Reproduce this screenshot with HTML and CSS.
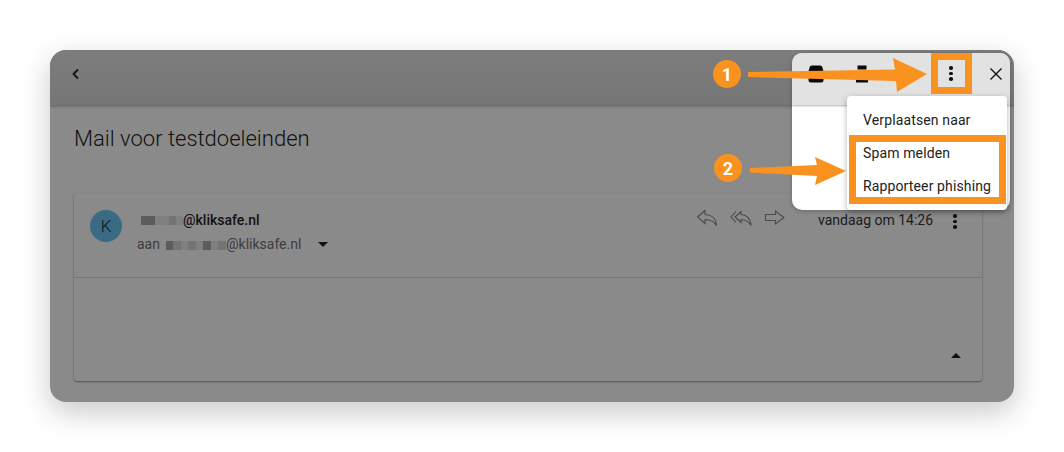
FILE: index.html
```html
<!DOCTYPE html>
<html lang="en">
<head>
  <meta charset="UTF-8">
  <title>Mail voor testdoeleinden</title>
  <link rel="stylesheet" href="styles.css">
</head>
<body>

<div class="window">
  <!-- Dimmed mail view -->
  <header class="topbar">
    <svg class="back" width="12" height="12" viewBox="0 0 12 12"><path d="M8 1.500 3.500 6 8 10.500" fill="none" stroke="#111" stroke-width="1.800"/></svg>
  </header>

  <main class="content">
    <h1 class="subject">Mail voor testdoeleinden</h1>

    <div class="card">
      <div class="card-head">
        <div class="avatar">K</div>
        <div class="people">
          <div class="from">
            <span class="blur">
              <i class="px dark"></i><i class="px dark"></i><i class="px soft"></i><i class="px soft"></i><i class="px mid"></i><i class="px soft"></i>
            </span>@kliksafe.nl
          </div>
          <div class="to">
            aan <span class="blur wide">
              <i class="px dark"></i><i class="px mid"></i><i class="px soft"></i><i class="px mid"></i><i class="px soft"></i><i class="px dark"></i><i class="px soft"></i><i class="px mid"></i>
            </span>@kliksafe.nl
            <span class="caret"></span>
          </div>
        </div>
        <div class="actions">
          <svg width="22" height="18" viewBox="0 0 22 18"><path d="M1.500 8 9 1.500V5.500C15 5.500 20 9 20.500 16.500 18 12.500 14.500 10.800 9 10.800V14.500Z" fill="none" stroke="#4a4a4a" stroke-width="1.100"/></svg>
          <svg width="22" height="18" viewBox="0 0 22 18"><path d="M5 8 11 2.500V5.500C16 5.500 20.500 9 21 16.500 18.500 12.500 15.500 10.800 11 10.800V13.500ZM6 2.500 1 8 6 13.500" fill="none" stroke="#4a4a4a" stroke-width="1.100"/></svg>
          <svg width="22" height="18" viewBox="0 0 22 18"><path d="M1.500 5.500H11.500V2L20 8.500 11.500 15V11.500H1.500Z" fill="none" stroke="#4a4a4a" stroke-width="1.100"/></svg>
        </div>
        <div class="date">vandaag om 14:26</div>
        <div class="dots"><i></i><i></i><i></i></div>
      </div>
      <div class="card-body">
        <span class="caret up"></span>
      </div>
    </div>
  </main>

  <!-- Undimmed toolbar part -->
  <div class="spotlight">
    <div class="spot-bar">
      <svg class="tool-a" width="16" height="18" viewBox="0 0 16 18"><path d="M1.500 3Q1.500 .5 4 .5H12Q14.500 .5 14.500 3L15.500 6H.5ZM.5 6.500H15.500V15Q15.500 17.500 13 17.500H3Q.5 17.500 .5 15Z" fill="#0a0a0a"/></svg>
      <svg class="tool-b" width="12" height="18" viewBox="0 0 12 18"><path d="M1.500 .5H10.500V4.500H1.500ZM0 7H12V8.500H0ZM0 14H12V17.500H0Z" fill="#0a0a0a"/></svg>
      <div class="more"><div class="dots"><i></i><i></i><i></i></div></div>
      <svg class="close" width="14" height="14" viewBox="0 0 14 14"><path d="M1.500 1.500 12.500 12.500M12.500 1.500 1.500 12.500" stroke="#111" stroke-width="1.400"/></svg>
    </div>
  </div>

  <ul class="menu">
    <li>Verplaatsen naar</li>
    <li>Spam melden</li>
    <li>Rapporteer phishing</li>
  </ul>
</div>

<!-- Annotations -->
<div class="mark mark-more"></div>
<div class="mark mark-items"></div>
<svg class="arrows" width="1064" height="452" viewBox="0 0 1064 452">
  <path d="M748 72 895 69.500 893 58 927 74 897 92 896 81 748 77Z" fill="#f9921f"/>
  <path d="M750 168 817 165 815 157 846 171 815 185 817 176 750 172.500Z" fill="#f9921f"/>
  <circle cx="727" cy="74" r="14" fill="#f9921f"/>
  <circle cx="728" cy="168" r="14" fill="#f9921f"/>
  <text x="727" y="80.500" class="num">1</text>
  <text x="728" y="174.500" class="num">2</text>
</svg>

</body>
</html>
```

FILE: styles.css
```css
body {
  margin: 0;
  padding: 50px;
  width: 964px;
  height: 352px;
  background-color: #fff;
  font-family: Roboto, sans-serif;
  overflow: hidden;
  position: relative;
}

.window {
  position: relative;
  height: 352px;
  border-radius: 16px;
  background-color: #8a8a8a;
  box-shadow: 0 10px 30px rgba(0, 0, 0, 0.22);
  overflow: hidden;
}

.topbar {
  display: flex;
  align-items: center;
  height: 55px;
  padding-left: 20px;
  padding-bottom: 8px;
  box-sizing: border-box;
  background: linear-gradient(#7d7d7d, #767676);
  box-shadow: 0 1px 3px rgba(0, 0, 0, 0.35);
}

.content {
  padding: 0 32px 0 24px;
}

.subject {
  margin: 21px 0 41px;
  font-size: 22px;
  line-height: 26px;
  font-weight: 300;
  color: #111;
}

.card {
  height: 188px;
  border-radius: 3px;
  background-color: #8a8a8a;
  box-shadow: 0 1px 2px rgba(0, 0, 0, 0.4);
  border-top: 1px solid #868686;
  box-sizing: border-box;
}

.card-head {
  display: flex;
  align-items: flex-start;
  height: 84px;
  padding: 16px 0 0 16px;
  box-sizing: border-box;
  border-bottom: 1px solid #777;
}

.avatar {
  width: 32px;
  height: 32px;
  border-radius: 50%;
  background-color: #3b6b84;
  color: #111;
  font-size: 17px;
  font-weight: 300;
  line-height: 32px;
  text-align: center;
}

.people {
  margin-left: 15px;
  width: 559px;
}

.from {
  display: flex;
  align-items: center;
  font-size: 14px;
  font-weight: 500;
  line-height: 20px;
  color: #111;
}

.to {
  display: flex;
  align-items: center;
  margin-top: 4px;
  font-size: 14px;
  line-height: 20px;
  color: #3c3c3c;
}

.blur {
  display: flex;
  align-items: center;
  margin-left: 4px;
}

.blur.wide {
  margin-left: 6px;
  padding-top: 3px;
}

.px {
  display: block;
  width: 7px;
  height: 9px;
}

.wide .px {
  width: 7.500px;
}

.px.dark { background-color: #5c5c5c; }
.px.mid { background-color: #747474; }
.px.soft { background-color: #808080; }

.caret {
  width: 0;
  height: 0;
  margin-left: 17px;
  border-left: 5px solid transparent;
  border-right: 5px solid transparent;
  border-top: 5px solid #111;
}

.caret.up {
  margin: 0;
  border-top: none;
  border-bottom: 5px solid #111;
}

.actions {
  display: flex;
  gap: 12px;
  margin-top: -1px;
}

.date {
  margin-left: 32px;
  font-size: 14px;
  line-height: 20px;
  color: #1a1a1a;
}

.dots {
  display: flex;
  flex-direction: column;
  gap: 2px;
  margin-left: 20px;
  margin-top: 4px;
}

.dots i {
  display: block;
  width: 3.500px;
  height: 3.500px;
  border-radius: 50%;
  background-color: #111;
}

.card-body {
  display: flex;
  justify-content: flex-end;
  padding: 75px 21px 0 0;
}

/* lies over the dimmed window */
.spotlight {
  position: absolute;
  left: 742px;
  top: 3px;
  width: 218px;
  height: 157px;
  border-radius: 10px;
  background-color: #fff;
  box-shadow: 0 1px 4px rgba(0, 0, 0, 0.25);
  overflow: hidden;
}

.spot-bar {
  display: flex;
  align-items: center;
  height: 52px;
  padding-bottom: 11px;
  box-sizing: border-box;
  background: #e2e2e2;
  box-shadow: 0 1px 2px rgba(0, 0, 0, 0.3);
}

.tool-a {
  margin-left: 16px;
}

.tool-b {
  margin-left: 32px;
}

.more {
  display: flex;
  justify-content: center;
  width: 30px;
  margin-left: 68px;
}

.more .dots {
  margin: 0;
}

.close {
  margin-left: 23px;
}

.menu {
  position: absolute;
  left: 797px;
  top: 46px;
  width: 160px;
  height: 114px;
  margin: 0;
  padding: 8px 0 0;
  box-sizing: border-box;
  list-style: none;
  border-radius: 4px;
  background-color: #fff;
  box-shadow: 0 2px 6px rgba(0, 0, 0, 0.3);
}

.menu li {
  height: 33px;
  padding-left: 16px;
  font-size: 14px;
  letter-spacing: 0.13px;
  line-height: 33px;
  color: #222;
}

.mark {
  position: absolute;
  box-sizing: border-box;
  border: 7px solid #f9921f;
}

.mark-more {
  left: 931px;
  top: 53px;
  width: 41px;
  height: 41px;
}

.mark-items {
  left: 849px;
  top: 135px;
  width: 157px;
  height: 69px;
}

.arrows {
  position: absolute;
  left: 0;
  top: 0;
}

.num {
  font-family: Roboto, sans-serif;
  font-size: 18px;
  font-weight: 700;
  fill: #fff;
  text-anchor: middle;
}
```
